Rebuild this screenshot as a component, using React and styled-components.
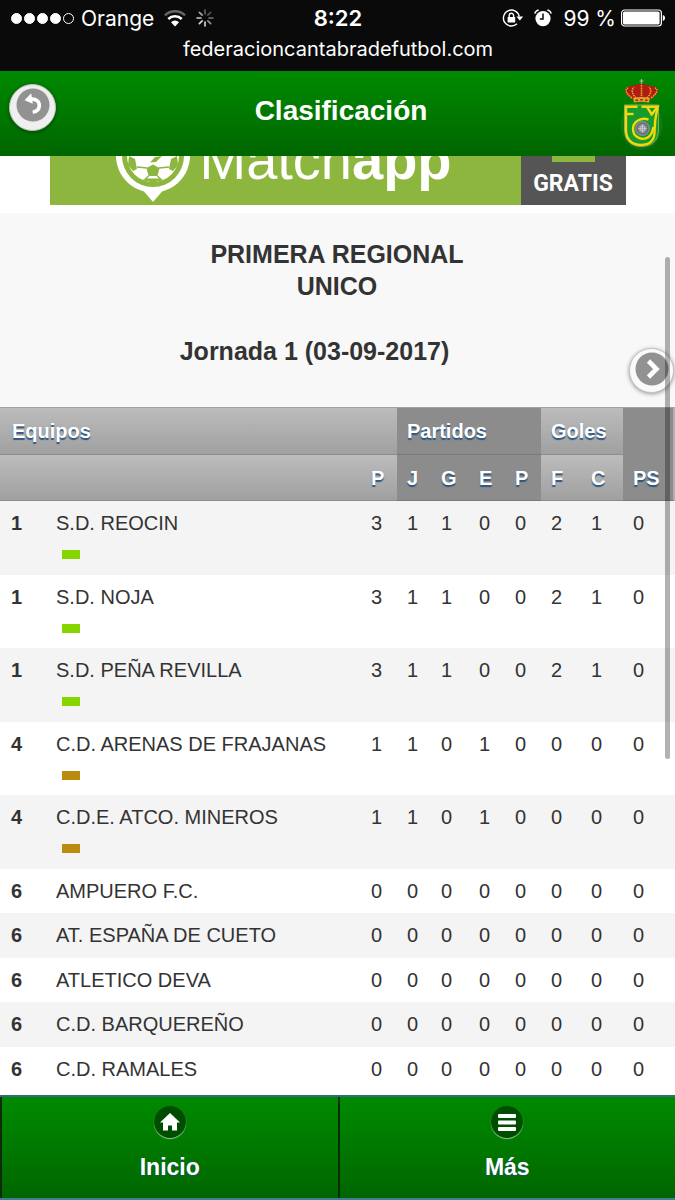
import React from "react";
import styled, { createGlobalStyle } from "styled-components";

const GlobalStyle = createGlobalStyle`
  * {
    box-sizing: border-box;
  }
  body {
    margin: 0;
    background-color: #fff;
    color: #333;
    font-family: "Liberation Sans", Arial, sans-serif;
  }
`;

const Page = styled.div`
  display: flex;
  flex-direction: column;
  min-height: 100vh;
`;

/* status bar */

const StatusBar = styled.div`
  padding: 4px 10px 5px 11px;
  background-color: #0a0a0a;
  color: #fff;
  font-family: Inter, sans-serif;
`;

const StatusRow = styled.div`
  display: grid;
  grid-template-columns: 1fr auto 1fr;
  align-items: center;
  height: 28px;
  font-size: 21px;
`;

const StatusGroup = styled.div`
  display: flex;
  align-items: center;
  justify-content: ${(props) => (props.$end ? "flex-end" : "flex-start")};
  gap: ${(props) => (props.$end ? "5px" : "10px")};
  white-space: nowrap;
`;

const StatusIcons = styled.div`
  display: flex;
  gap: 10px;
  margin-right: 6px;
`;

const Dots = styled.div`
  display: flex;
  gap: 2px;
  margin-right: -3px;
`;

const Dot = styled.span`
  width: 11px;
  height: 11px;
  border: 1px solid #fff;
  border-radius: 50%;
  background-color: ${(props) => (props.$on ? "#fff" : "transparent")};
`;

const Clock = styled.span`
  font-size: 22px;
  font-weight: 600;
`;

const Address = styled.div`
  line-height: 34px;
  font-size: 20px;
  text-align: center;
`;

/* header */

const HeaderBlock = styled.header`
  display: grid;
  grid-template-columns: 1fr auto 1fr;
  align-items: center;
  height: 85px;
  padding: 0 10px 0 9px;
  background-image: linear-gradient(#008a00, #006600);
  color: #fff;
`;

const Title = styled.h1`
  margin: 0;
  padding: 0 0 6px 8px;
  font-size: 28px;
  line-height: 36px;
`;

const RoundButton = styled.button`
  display: flex;
  flex: none;
  align-items: center;
  justify-content: center;
  width: ${(props) => props.$size}px;
  height: ${(props) => props.$size}px;
  padding: 0 0 4px;
  border: 1px solid #c4c4c4;
  border-radius: 50%;
  background-color: ${(props) => props.$bg || "#fafafa"};
  box-shadow: 0 1px 4px rgba(0, 0, 0, 0.4);
`;

const BackButton = styled(RoundButton)`
  margin-bottom: 13px;
`;

const CrestLink = styled.a`
  display: flex;
  justify-self: end;
`;

/* banner */

const Main = styled.main`
  position: relative;
  flex: 1;
`;

const BannerClip = styled.a`
  display: flex;
  align-items: flex-end;
  width: 86%;
  max-width: 576px;
  height: 49px;
  margin: 0 auto 8px;
  overflow: hidden;
  color: #fff;
  text-decoration: none;
`;

const Banner = styled.div`
  display: flex;
  flex: 1;
  height: 96px;
  background-color: #8db63f;
`;

const BannerBrand = styled.div`
  display: flex;
  flex: 1;
  padding-left: 66px;
`;

const BannerName = styled.span`
  margin-left: 10px;
  font-size: 56px;
  line-height: 102px;
`;

const BannerFree = styled.div`
  display: flex;
  flex-direction: column;
  align-items: center;
  justify-content: space-between;
  width: 105px;
  padding: 11px 0 6px;
  background-color: #555;
  font-family: Roboto, sans-serif;
  font-size: 23px;
  font-weight: 700;
  line-height: 30px;
`;

const FreeBox = styled.span`
  width: 43px;
  height: 42px;
  background-color: #8db63f;
`;

/* competition */

const Intro = styled.section`
  padding: 25px 1px 14px 0;
  background-color: #f8f8f8;
`;

const Heading = styled.h2`
  margin: 0;
  font-size: 25px;
  line-height: 32px;
  text-align: center;
`;

const RoundRow = styled.div`
  display: flex;
  height: 58px;
  margin-top: 33px;

  ${Heading} {
    flex: 1;
  }
  ${RoundButton} {
    align-self: flex-end;
  }
`;

/* standings */

const Standings = styled.table`
  width: 100%;
  table-layout: fixed;
  border-spacing: 0;
  font-size: 20px;
  line-height: 24px;
  text-align: left;
`;

const Col = styled.col`
  width: ${(props) => (props.$w ? props.$w + "px" : "auto")};
`;

const HeadRow = styled.tr`
  height: ${(props) => (props.$first ? 48 : 46)}px;
`;

const HeadCell = styled.th`
  padding: 0 0 0 ${(props) => (props.$lead ? 12 : 10)}px;
  border-top: ${(props) => (props.$top ? "1px solid #a3a3a3" : "0")};
  border-bottom: 1px solid ${(props) => (props.$dark ? "#7a7a7a" : "#8c8c8c")};
  background: ${(props) => (props.$dark ? "#8c8c8c" : "linear-gradient(#bcbcbc, #a0a0a0)")};
  color: #fff;
  text-shadow: 0 2px 1px #2a5680;
`;

const LastHead = styled(HeadCell)`
  padding-bottom: 10px;
  border-right: 2px solid #b0b0b0;
  vertical-align: bottom;
`;

const TeamRow = styled.tr`
  height: ${(props) => (props.$tall ? 73 : 44)}px;

  &:nth-child(odd) {
    height: ${(props) => (props.$tall ? 74 : 45)}px;
    background-color: #f4f4f4;
  }
`;

const Cell = styled.td`
  padding: 10px 0 0 10px;
  vertical-align: top;
  white-space: nowrap;
`;

const Rank = styled.th`
  padding: 10px 0 0 11px;
  vertical-align: top;
`;

const Marker = styled.span`
  display: block;
  width: 18px;
  height: 9px;
  margin: 15px 0 0 6px;
  background-color: ${(props) => props.$color};
`;

const ScrollThumb = styled.div`
  position: absolute;
  top: 101px;
  right: 5px;
  width: 5px;
  height: 502px;
  border-radius: 3px;
  background-color: rgba(0, 0, 0, 0.3);
`;

/* footer */

const FooterBar = styled.nav`
  display: flex;
  border-top: 2px solid #2f6f6c;
  border-bottom: 2px solid #3f7f94;
  background-image: linear-gradient(#008a00, #006600);
`;

const FooterLink = styled.a`
  display: flex;
  flex: 1;
  flex-direction: column;
  align-items: center;
  gap: 13px;
  height: 101px;
  padding-top: 9px;
  color: #fff;
  font-size: 23px;
  font-weight: 700;
  line-height: 32px;
  text-decoration: none;
  text-shadow: 0 1px 1px #1d4a7a;

  &:first-child {
    border-left: 2px solid #0c2c0c;
    border-right: 2px solid #0c2c0c;
  }
`;

const FooterIcon = styled.span`
  display: flex;
  align-items: center;
  justify-content: center;
  width: 32px;
  height: 32px;
  border-radius: 50%;
  background-color: #004d00;
  box-shadow: 0 1px 1px rgba(255, 255, 255, 0.6);
`;

const WifiIcon = () => (
  <svg width="22" height="17" viewBox="0 0 22 17" fill="none">
    <path d="M1 5.4a14.2 14.2 0 0 1 20 0" stroke="#666" strokeWidth="2.4" />
    <path d="M4.3 9a9.6 9.6 0 0 1 13.4 0" stroke="#fff" strokeWidth="2.6" />
    <path d="M11 16.5 7 12.2a5.8 5.8 0 0 1 8 0z" fill="#fff" />
  </svg>
);

const SpinnerIcon = () => (
  <svg width="18" height="18" viewBox="0 0 18 18" strokeWidth="1.6" strokeLinecap="round">
    {["#666", "#555", "#777", "#999", "#ddd", "#ddd", "#ccc", "#aaa"].map((stroke, i) => (
      <path key={i} d="M9 1v4" stroke={stroke} transform={`rotate(${i * 45} 9 9)`} />
    ))}
  </svg>
);

const LockIcon = () => (
  <svg width="22" height="18" viewBox="0 0 22 18" fill="none" stroke="#fff" strokeWidth="1.4">
    <path d="M17.3 7.6A8 8 0 1 0 15 14.8" />
    <path d="m14.4 7.6 6.8 0-3.4 4z" fill="#fff" stroke="none" />
    <rect x="5.6" y="8" width="7.6" height="5.4" rx="0.6" fill="#fff" stroke="none" />
    <path d="M7.2 8.4V6.5a2.2 2.2 0 0 1 4.4 0v1.9" />
  </svg>
);

const AlarmIcon = () => (
  <svg width="18" height="18" viewBox="0 0 18 18" fill="none">
    <circle cx="9" cy="9.6" r="7.6" fill="#fff" />
    <path d="M.8 4.6A5 5 0 0 1 4.6 1M17.2 4.6A5 5 0 0 0 13.4 1" stroke="#fff" strokeWidth="1.4" />
    <path d="M9 4.6v5.4H5.8" stroke="#0a0a0a" strokeWidth="1.5" />
  </svg>
);

const BatteryIcon = () => (
  <svg width="44" height="18" viewBox="0 0 44 18">
    <rect x="0.6" y="1" width="39.8" height="16" rx="3" fill="none" stroke="#fff" strokeWidth="1.2" />
    <rect x="2" y="2.4" width="36.6" height="13.2" rx="1.6" fill="#fff" />
    <path d="M41.8 6v6c1.6-.4 2.2-1.6 2.2-3s-.6-2.6-2.2-3z" fill="#fff" />
  </svg>
);

const BackIcon = () => (
  <svg width="34" height="34" viewBox="0 0 34 34">
    <circle cx="17" cy="17" r="16.5" fill="#929292" />
    <path d="M13 11.4c6.200-1.200 10.300 1.400 10.300 6.200 0 3.800-2.400 6-6.600 6.600" fill="none" stroke="#fff" strokeWidth="3.6" />
    <path d="m8.600 12.200 6.600-7 1.600 10.600z" fill="#fff" />
  </svg>
);

const NextIcon = () => (
  <svg width="34" height="34" viewBox="0 0 34 34">
    <circle cx="17" cy="17" r="16.5" fill="#929292" />
    <path d="m13.500 9 8 8-8 8" fill="none" stroke="#fff" strokeWidth="4.6" />
  </svg>
);

const CrestIcon = () => (
  <svg width="46" height="74" viewBox="0 0 46 74">
    <ellipse cx="22.5" cy="48" rx="21" ry="25" fill="#fff" opacity="0.06" />
    <path d="M22.5 2v6M20.500 4h4" stroke="#a9b9a0" strokeWidth="1.2" />
    <path d="M13 22C4 17 4 10 12 9c4-1 6-2 10.500-2S29 8 33 9c8 1 8 8-1 13z" fill="#b01c14" />
    <path d="M13 21C6 16 6 12 9 11M32 21c7-5 7-9 4-10M17 21c-4-4-5-8-2-11M28 21c4-4 5-8 2-11M22.500 8v13" fill="none" stroke="#e8a628" strokeWidth="1.600" strokeDasharray="1.600 0.800" />
    <path d="M14 21q8.500-2 17 0l-1 4.500q-7.500-1.500-15 0z" fill="#e2a02c" />
    <path d="M16.500 23.300h2.600M21.200 22.800h2.600M26 23.300h2.600" stroke="#b01c14" strokeWidth="1.600" />
    <path d="M5.500 28h34v25c0 10-6.500 16.500-17 16.500S5.500 63 5.500 53z" fill="#159c2c" stroke="#a9b070" strokeWidth="0.8" />
    <g fill="none" stroke="#f4d80c" strokeWidth="2.400">
      <path d="M18.500 29.800H7V53c0 9 5.500 15 15 15 9 0 13.500-5 13.500-13 0-7 .5-14 3-24.500" />
      <path d="M8 37h6.500" />
      <path d="M22.500 29.800h16L32 38.500M23 29.800h5l5 8" />
      <path d="M29.500 42.500c-7.500-2.500-15.500 2-15.500 9.500 0 8 9 12.500 15.500 8 3.500-2.500 4-6 5-10" />
    </g>
    <circle cx="23.500" cy="51.500" r="7.400" fill="#858b91" />
    <circle cx="23.500" cy="51.500" r="5.400" fill="none" stroke="#646a74" strokeWidth="1.200" />
    <path d="M23.500 47.500v8M19.500 51.500h8" stroke="#c4c8ce" strokeWidth="1.200" />
    <circle cx="23.500" cy="51.500" r="2.600" fill="none" stroke="#c4c8ce" />
  </svg>
);

const PinIcon = () => (
  <svg width="74" height="96" viewBox="0 0 74 96">
    <path d="M37 93 28 82.500a37 37 0 1 1 18 0z" fill="#fff" />
    <circle cx="37" cy="47" r="31" fill="#8db63f" />
    <circle cx="37" cy="47" r="26" fill="#fff" />
    <g fill="#8db63f">
      <path d="m30.500 59 6.500-3.500 6.500 3.500-2 8h-9zM13 47l6 3 2 10-4 2-5-6zM61 47l-6 3-2 10 4 2 5-6zM26 71l5-1.500h12l5 1.500-11 2.500zM39 48l7-1-6 6-6 .500z" />
    </g>
    <path d="m31 59-10-1M43 59l10-1M32.500 67l-4 4M41.500 67l4 4" stroke="#8db63f" strokeWidth="1.500" />
  </svg>
);

const HomeIcon = () => (
  <svg width="20" height="18" viewBox="0 0 20 18" fill="#fff">
    <path d="M10 0 0 9.600h3V17.500h5v-5h4v5h5V9.600h3z" />
  </svg>
);

const BarsIcon = () => (
  <svg width="18" height="17" viewBox="0 0 18 17" fill="#fff">
    <rect width="18" height="4" rx="1" />
    <rect y="6.500" width="18" height="4" rx="1" />
    <rect y="13" width="18" height="4" rx="1" />
  </svg>
);

const GREEN = "#86d400";
const GOLD = "#bb8b10";

const teams = [
  { rank: 1, name: "S.D. REOCIN", marker: GREEN, stats: [3, 1, 1, 0, 0, 2, 1, 0] },
  { rank: 1, name: "S.D. NOJA", marker: GREEN, stats: [3, 1, 1, 0, 0, 2, 1, 0] },
  { rank: 1, name: "S.D. PEÑA REVILLA", marker: GREEN, stats: [3, 1, 1, 0, 0, 2, 1, 0] },
  { rank: 4, name: "C.D. ARENAS DE FRAJANAS", marker: GOLD, stats: [1, 1, 0, 1, 0, 0, 0, 0] },
  { rank: 4, name: "C.D.E. ATCO. MINEROS", marker: GOLD, stats: [1, 1, 0, 1, 0, 0, 0, 0] },
  { rank: 6, name: "AMPUERO F.C.", stats: [0, 0, 0, 0, 0, 0, 0, 0] },
  { rank: 6, name: "AT. ESPAÑA DE CUETO", stats: [0, 0, 0, 0, 0, 0, 0, 0] },
  { rank: 6, name: "ATLETICO DEVA", stats: [0, 0, 0, 0, 0, 0, 0, 0] },
  { rank: 6, name: "C.D. BARQUEREÑO", stats: [0, 0, 0, 0, 0, 0, 0, 0] },
  { rank: 6, name: "C.D. RAMALES", stats: [0, 0, 0, 0, 0, 0, 0, 0] },
];

const columns = [46, null, 36, 34, 38, 36, 36, 40, 42, 52];

const Status = () => (
  <StatusBar>
    <StatusRow>
      <StatusGroup>
        <Dots>
          {[1, 2, 3, 4, 5].map((n) => (
            <Dot key={n} $on={n < 5} />
          ))}
        </Dots>
        <span>Orange</span>
        <WifiIcon />
        <SpinnerIcon />
      </StatusGroup>
      <Clock>8:22</Clock>
      <StatusGroup $end>
        <StatusIcons>
          <LockIcon />
          <AlarmIcon />
        </StatusIcons>
        <span>99 %</span>
        <BatteryIcon />
      </StatusGroup>
    </StatusRow>
    <Address>federacioncantabradefutbol.com</Address>
  </StatusBar>
);

const Header = () => (
  <HeaderBlock>
    <BackButton $size={47} $bg="#efefef" aria-label="Volver">
      <BackIcon />
    </BackButton>
    <Title>Clasificación</Title>
    <CrestLink href="#federacion" aria-label="Federación Cántabra de Fútbol">
      <CrestIcon />
    </CrestLink>
  </HeaderBlock>
);

const Table = () => (
  <Standings>
    <colgroup>
      {columns.map((w, i) => (
        <Col key={i} $w={w} />
      ))}
    </colgroup>
    <thead>
      <HeadRow $first>
        <HeadCell $top $lead colSpan={3}>Equipos</HeadCell>
        <HeadCell $top $dark colSpan={4}>Partidos</HeadCell>
        <HeadCell $top colSpan={2}>Goles</HeadCell>
        <LastHead $top $dark rowSpan={2}>PS</LastHead>
      </HeadRow>
      <HeadRow>
        <HeadCell colSpan={2} />
        <HeadCell>P</HeadCell>
        <HeadCell $dark>J</HeadCell>
        <HeadCell $dark>G</HeadCell>
        <HeadCell $dark>E</HeadCell>
        <HeadCell $dark>P</HeadCell>
        <HeadCell>F</HeadCell>
        <HeadCell>C</HeadCell>
      </HeadRow>
    </thead>
    <tbody>
      {teams.map((team) => (
        <TeamRow key={team.name} $tall={Boolean(team.marker)}>
          <Rank scope="row">{team.rank}</Rank>
          <Cell>
            {team.name}
            {team.marker && <Marker $color={team.marker} />}
          </Cell>
          {team.stats.map((value, i) => (
            <Cell key={i}>{value}</Cell>
          ))}
        </TeamRow>
      ))}
    </tbody>
  </Standings>
);

const Footer = () => (
  <FooterBar>
    <FooterLink href="#inicio">
      <FooterIcon><HomeIcon /></FooterIcon>
      Inicio
    </FooterLink>
    <FooterLink href="#mas">
      <FooterIcon><BarsIcon /></FooterIcon>
      Más
    </FooterLink>
  </FooterBar>
);

const App = () => {
  return (
    <Page>
      <GlobalStyle />
      <Status />
      <Header />
      <Main>
        <BannerClip href="#matchapp">
          <Banner>
            <BannerBrand>
              <PinIcon />
              <BannerName>Match<b>app</b></BannerName>
            </BannerBrand>
            <BannerFree>
              <FreeBox />
              GRATIS
            </BannerFree>
          </Banner>
        </BannerClip>
        <Intro>
          <Heading>PRIMERA REGIONAL<br />UNICO</Heading>
          <RoundRow>
            <Heading>Jornada 1 (03-09-2017)</Heading>
            <RoundButton $size={45} aria-label="Jornada siguiente">
              <NextIcon />
            </RoundButton>
          </RoundRow>
        </Intro>
        <Table />
        <ScrollThumb />
      </Main>
      <Footer />
    </Page>
  );
};

export default App;
